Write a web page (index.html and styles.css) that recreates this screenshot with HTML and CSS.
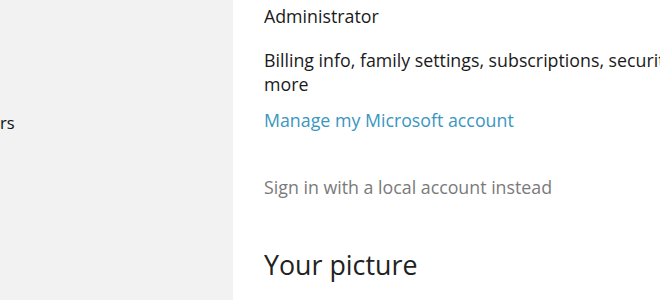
FILE: index.html
```html
<!DOCTYPE html>
<html lang="en">

<head>
    <meta charset="UTF-8">
    <title>Your account</title>
    <link rel="stylesheet" href="styles.css">
</head>

<body>
    <div class="page">
        <!-- Left navigation -->
        <div class="sidebar">
            <div class="nav-item">rs</div>
        </div>

        <!-- Account details -->
        <div class="content">
            <div class="role">Administrator</div>
            <p class="info">Billing info, family settings, subscriptions, security settings, and<br>more</p>
            <a class="link" href="#">Manage my Microsoft account</a>
            <a class="local" href="#">Sign in with a local account instead</a>
            <h2>Your picture</h2>
        </div>
    </div>
</body>

</html>
```

FILE: styles.css
```css
/* General Styles */
body {
    font-family: "Open Sans", "Noto Sans", sans-serif;
    margin: 0;
    background-color: #fff;
    color: #1a1a1a;
}

.page {
    display: flex;
    height: 300px;
    overflow: hidden;
}

/* Sidebar */
.sidebar {
    width: 233px;
    flex-shrink: 0;
    background-color: #f2f2f2;
    padding-top: 111px;
    box-sizing: border-box;
}

.nav-item {
    font-size: 16.5px;
    line-height: 24px;
    color: #111;
}

/* Content */
.content {
    padding: 4px 0 0 31px;
    flex-shrink: 0;
}

.role {
    font-size: 17.8px;
    line-height: 24px;
}

.info {
    font-size: 17.8px;
    line-height: 24px;
    margin: 20px 0 0;
    white-space: nowrap;
}

.link,
.local {
    display: block;
    font-size: 17.8px;
    line-height: 24px;
    text-decoration: none;
}

.link {
    color: #3a96bf;
    margin-top: 12px;
}

.local {
    color: #7a7a7a;
    margin-top: 43px;
}

h2 {
    font-size: 26.8px;
    font-weight: normal;
    color: #222;
    margin: 48px 0 0;
    line-height: 36px;
}
```
